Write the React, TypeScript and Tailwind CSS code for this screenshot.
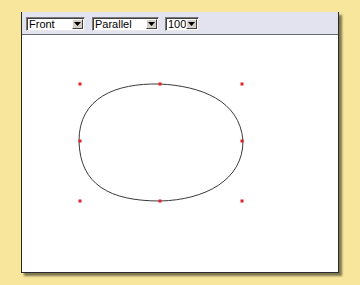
import { useState } from "react"

function FakeSelect({ value, width }: { value: string; width: string }) {
  return (
    <div
      className={`${width} h-[14px] flex items-stretch bg-white border-t border-l border-t-[#7a7a7a] border-l-[#7a7a7a] border-b border-r border-b-[#e8e8e8] border-r-[#e8e8e8] shadow-[inset_1px_1px_0_#404040]`}
    >
      <span className="flex-1 pl-[2px] text-[11px] leading-[12px] text-black font-['Liberation_Sans',Arial,sans-serif]">
        {value}
      </span>
      <span className="w-[11px] my-[1px] mr-[1px] bg-[#d4d0c8] border-t border-l border-t-white border-l-white border-b border-r border-b-[#404040] border-r-[#404040] flex items-center justify-center">
        <svg width="7" height="4" viewBox="0 0 7 4">
          <path d="M0 0h7L3.5 4z" fill="#000" />
        </svg>
      </span>
    </div>
  )
}

export default function App() {
  const [view] = useState("Front")

  const dots = [
    [80, 84],
    [160, 84],
    [242, 84],
    [80, 141],
    [242, 141],
    [80, 201],
    [160, 201],
    [242, 201],
  ]

  return (
    <div className="w-[360px] h-[285px] bg-[#f8e69c] pt-[12px] pl-[21px]">

      {/* Panel */}
      <div className="w-[318px] h-[261px] flex flex-col border-l border-r border-b border-[#2a2a2a] shadow-[3px_3px_2px_rgba(60,60,40,0.65)]">

        {/* Toolbar */}
        <div className="h-[23px] bg-[#e3e3ef] border-b border-[#6b6b75] flex items-center pl-[4px] pt-[1px] gap-[7px]">
          <FakeSelect value={view} width="w-[59px]" />
          <FakeSelect value="Parallel" width="w-[67px]" />
          <FakeSelect value="100" width="w-[34px] -ml-[1px]" />
        </div>

        {/* Canvas */}
        <div className="flex-1 bg-white">
          <svg width="316" height="237" viewBox="22 35 316 237">
            <path
              d="M160 84 C200 86 240 100 243 141 C243 180 205 200 160 201 C110 201 80 185 79 141 C79 98 115 83 160 84 Z"
              fill="none"
              stroke="#3a3a3a"
              strokeWidth="1"
            />
            {dots.map(([x, y], i) => (
              <rect key={i} x={x - 1.5} y={y - 1.5} width="3" height="3" fill="#e0202a" />
            ))}
          </svg>
        </div>

      </div>
    </div>
  )
}
